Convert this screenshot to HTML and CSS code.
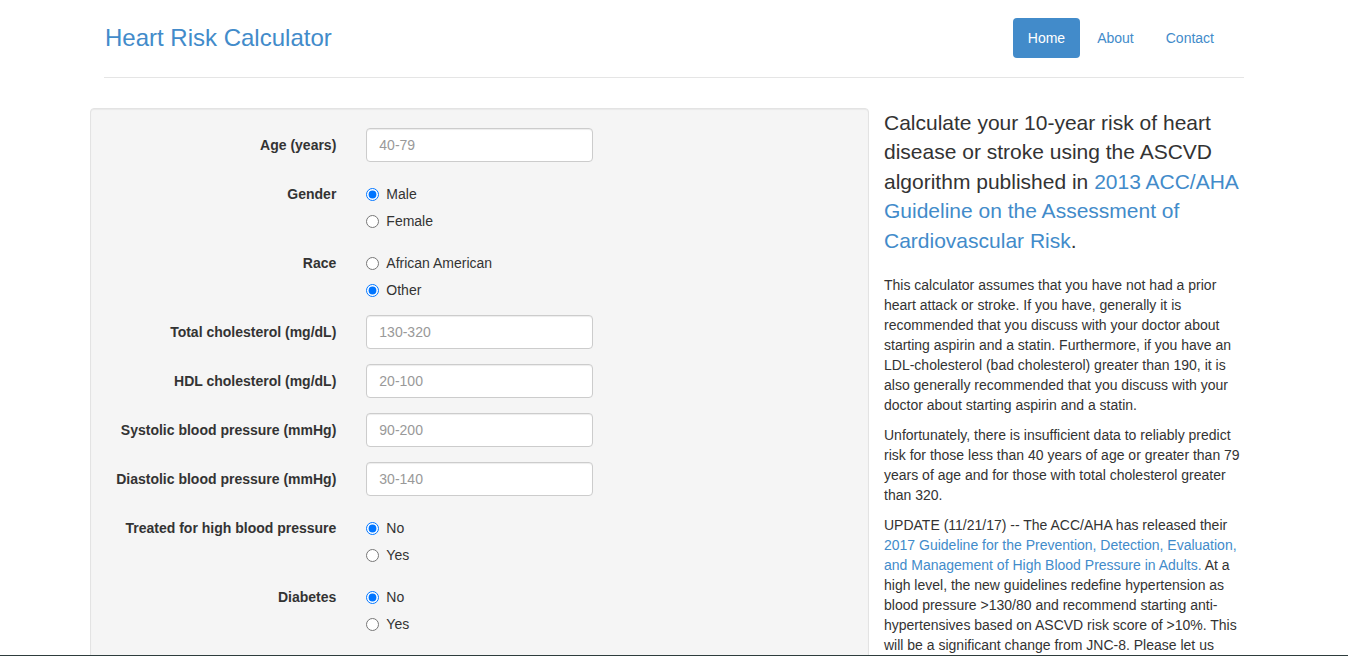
FILE: index.html
```html
<!DOCTYPE html>
<html lang="en">
<head>
<meta charset="utf-8">
<title>Heart Risk Calculator</title>
<link rel="stylesheet" href="styles.css">
</head>
<body>
<div class="container">
  <header class="header">
    <h3 class="brand">Heart Risk Calculator</h3>
    <ul class="nav">
      <li><a class="pill active" href="#">Home</a></li>
      <li><a class="pill" href="#">About</a></li>
      <li><a class="pill" href="#">Contact</a></li>
    </ul>
  </header>

  <div class="main">
    <div class="well">
      <form class="form">
        <div class="group">
          <label class="control-label">Age (years)</label>
          <div class="control"><input class="input" type="text" placeholder="40-79"></div>
        </div>
        <div class="group">
          <label class="control-label">Gender</label>
          <div class="control">
            <label class="radio"><input type="radio" name="gender" checked>Male</label>
            <label class="radio"><input type="radio" name="gender">Female</label>
          </div>
        </div>
        <div class="group">
          <label class="control-label">Race</label>
          <div class="control">
            <label class="radio"><input type="radio" name="race">African American</label>
            <label class="radio"><input type="radio" name="race" checked>Other</label>
          </div>
        </div>
        <div class="group">
          <label class="control-label">Total cholesterol (mg/dL)</label>
          <div class="control"><input class="input" type="text" placeholder="130-320"></div>
        </div>
        <div class="group">
          <label class="control-label">HDL cholesterol (mg/dL)</label>
          <div class="control"><input class="input" type="text" placeholder="20-100"></div>
        </div>
        <div class="group">
          <label class="control-label">Systolic blood pressure (mmHg)</label>
          <div class="control"><input class="input" type="text" placeholder="90-200"></div>
        </div>
        <div class="group">
          <label class="control-label">Diastolic blood pressure (mmHg)</label>
          <div class="control"><input class="input" type="text" placeholder="30-140"></div>
        </div>
        <div class="group">
          <label class="control-label">Treated for high blood pressure</label>
          <div class="control">
            <label class="radio"><input type="radio" name="treated" checked>No</label>
            <label class="radio"><input type="radio" name="treated">Yes</label>
          </div>
        </div>
        <div class="group">
          <label class="control-label">Diabetes</label>
          <div class="control">
            <label class="radio"><input type="radio" name="diabetes" checked>No</label>
            <label class="radio"><input type="radio" name="diabetes">Yes</label>
          </div>
        </div>
        <div class="group">
          <label class="control-label">Smoker</label>
          <div class="control">
            <label class="radio"><input type="radio" name="smoker" checked>No</label>
            <label class="radio"><input type="radio" name="smoker">Yes</label>
          </div>
        </div>
      </form>
    </div>

    <div class="side">
      <p class="lead">Calculate your 10-year risk of heart disease or stroke using the ASCVD algorithm published in <a href="#">2013 ACC/AHA Guideline on the Assessment of Cardiovascular Risk</a>.</p>
      <p>This calculator assumes that you have not had a prior heart attack or stroke. If you have, generally it is recommended that you discuss with your doctor about starting aspirin and a statin. Furthermore, if you have an LDL-cholesterol (bad cholesterol) greater than 190, it is also generally recommended that you discuss with your doctor about starting aspirin and a statin.</p>
      <p>Unfortunately, there is insufficient data to reliably predict risk for those less than 40 years of age or greater than 79 years of age and for those with total cholesterol greater than 320.</p>
      <p>UPDATE (11/21/17) -- The ACC/AHA has released their <a href="#">2017 Guideline for the Prevention, Detection, Evaluation, and Management of High Blood Pressure in Adults.</a> At a high level, the new guidelines redefine hypertension as blood pressure &gt;130/80 and recommend starting anti-hypertensives based on ASCVD risk score of &gt;10%. This will be a significant change from JNC-8. Please let us know if you have any questions.</p>
    </div>
  </div>
</div>
<div class="screen-edge"></div>
</body>
</html>
```

FILE: styles.css
```css
* { box-sizing: border-box; }

html, body {
  margin: 0;
  padding: 0;
  background: #fff;
}

body {
  font-family: "Liberation Sans", Arial, Helvetica, sans-serif;
  font-size: 14px;
  line-height: 20px;
  color: #333;
}

a {
  color: #428bca;
  text-decoration: none;
}

.container {
  width: 1170px;
  margin: 0 auto;
  padding: 0 15px;
}

.header {
  display: flex;
  justify-content: space-between;
  align-items: flex-start;
  padding: 18px 0 19px;
  border-bottom: 1px solid #e5e5e5;
}

.brand {
  margin: 0 0 0 1px;
  font-size: 24px;
  line-height: 40px;
  font-weight: normal;
  color: #428bca;
}

.nav {
  display: flex;
  gap: 2px;
  list-style: none;
  margin: 0 15px 0 0;
  padding: 0;
}

.pill {
  display: block;
  padding: 10px 15px;
  line-height: 20px;
  border-radius: 4px;
  color: #428bca;
}

.pill.active {
  background: #428bca;
  color: #fff;
}

.main {
  display: flex;
  margin: 30px -15px 0;
}

.well {
  width: 779px;
  margin-left: 1px;
  flex: none;
  min-height: 600px;
  padding: 19px;
  background: #f5f5f5;
  border: 1px solid #e3e3e3;
  border-radius: 4px;
  box-shadow: inset 0 1px 1px rgba(0, 0, 0, 0.05);
}

.form {
  margin: 0 -15px;
}

.group {
  display: grid;
  grid-template-columns: 256.33px 256.33px;
  margin-bottom: 15px;
}

.control-label {
  padding: 7px 15px 0;
  text-align: right;
  font-weight: bold;
}

.control {
  padding: 0 15px;
}

.input {
  display: block;
  width: 100%;
  height: 34px;
  padding: 6px 12px;
  font-family: inherit;
  font-size: 14px;
  line-height: 20px;
  color: #555;
  background: #fff;
  border: 1px solid #ccc;
  border-radius: 4px;
  box-shadow: inset 0 1px 1px rgba(0, 0, 0, 0.075);
}

.input::placeholder {
  color: #999;
}

.radio {
  display: block;
  position: relative;
  min-height: 27px;
  padding: 7px 0 0 20px;
  font-weight: normal;
}

.radio input {
  position: absolute;
  left: 0;
  top: 7px;
  width: 13px;
  height: 13px;
  margin: 4px 0 0;
}

.side {
  width: 390px;
  flex: none;
  padding: 0 15px;
}

.side p {
  margin: 0 0 10px;
}

.side .lead {
  margin-bottom: 20px;
  font-size: 21px;
  line-height: 1.4;
  font-weight: 300;
}

.screen-edge {
  position: fixed;
  left: 0;
  right: 0;
  bottom: 0;
  height: 1px;
  background: #2e3d3d;
}
```
